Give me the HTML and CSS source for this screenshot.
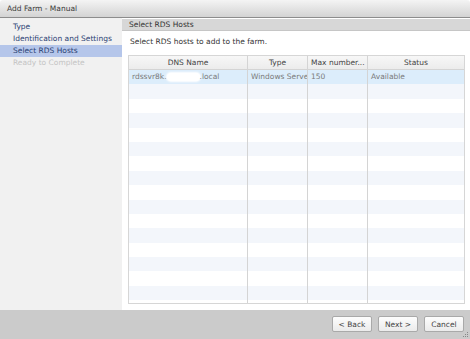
FILE: index.html
```
<!DOCTYPE html>
<html lang="en">
<head>
  <meta charset="UTF-8" />
  <title>Add Farm - Manual</title>
  <link rel="stylesheet" href="styles.css">
</head>
<body>
  <div class="window">
    <div class="titlebar">Add Farm - Manual</div>
    <div class="main">
      <div class="steps">
        <div class="step">Type</div>
        <div class="step">Identification and Settings</div>
        <div class="step current">Select RDS Hosts</div>
        <div class="step disabled">Ready to Complete</div>
      </div>
      <div class="panel">
        <div class="panel-head">Select RDS Hosts</div>
        <div class="panel-body">
          <p class="intro">Select RDS hosts to add to the farm.</p>
          <div class="grid">
            <div class="row head">
              <div class="cell center">DNS Name</div>
              <div class="cell center">Type</div>
              <div class="cell">Max number...</div>
              <div class="cell center">Status</div>
            </div>
            <div class="rows">
              <div class="row selected">
                <div class="cell">rdssvr8k.<span class="blur"></span>.local</div>
                <div class="cell">Windows Server</div>
                <div class="cell">150</div>
                <div class="cell">Available</div>
              </div>
              <div class="row"><div class="cell"></div><div class="cell"></div><div class="cell"></div><div class="cell"></div></div>
              <div class="row"><div class="cell"></div><div class="cell"></div><div class="cell"></div><div class="cell"></div></div>
              <div class="row"><div class="cell"></div><div class="cell"></div><div class="cell"></div><div class="cell"></div></div>
              <div class="row"><div class="cell"></div><div class="cell"></div><div class="cell"></div><div class="cell"></div></div>
              <div class="row"><div class="cell"></div><div class="cell"></div><div class="cell"></div><div class="cell"></div></div>
              <div class="row"><div class="cell"></div><div class="cell"></div><div class="cell"></div><div class="cell"></div></div>
              <div class="row"><div class="cell"></div><div class="cell"></div><div class="cell"></div><div class="cell"></div></div>
              <div class="row"><div class="cell"></div><div class="cell"></div><div class="cell"></div><div class="cell"></div></div>
              <div class="row"><div class="cell"></div><div class="cell"></div><div class="cell"></div><div class="cell"></div></div>
              <div class="row"><div class="cell"></div><div class="cell"></div><div class="cell"></div><div class="cell"></div></div>
              <div class="row"><div class="cell"></div><div class="cell"></div><div class="cell"></div><div class="cell"></div></div>
              <div class="row"><div class="cell"></div><div class="cell"></div><div class="cell"></div><div class="cell"></div></div>
              <div class="row"><div class="cell"></div><div class="cell"></div><div class="cell"></div><div class="cell"></div></div>
              <div class="row"><div class="cell"></div><div class="cell"></div><div class="cell"></div><div class="cell"></div></div>
              <div class="row"><div class="cell"></div><div class="cell"></div><div class="cell"></div><div class="cell"></div></div>
              <div class="row"><div class="cell"></div><div class="cell"></div><div class="cell"></div><div class="cell"></div></div>
            </div>
          </div>
        </div>
      </div>
    </div>
    <div class="footer">
      <button type="button">&lt; Back</button>
      <button type="button">Next &gt;</button>
      <button type="button">Cancel</button>
      <svg class="grip" width="6" height="6" viewBox="0 0 6 6">
        <rect x="4" y="0" width="1" height="1" fill="#888"/>
        <rect x="2" y="2" width="1" height="1" fill="#888"/>
        <rect x="4" y="2" width="1" height="1" fill="#888"/>
        <rect x="0" y="4" width="1" height="1" fill="#888"/>
        <rect x="2" y="4" width="1" height="1" fill="#888"/>
        <rect x="4" y="4" width="1" height="1" fill="#888"/>
      </svg>
    </div>
  </div>
</body>
</html>
```

FILE: styles.css
```
* {
  box-sizing: border-box;
}

body {
  margin: 0;
  font-family: 'DejaVu Sans', Verdana, sans-serif;
  font-size: 7.5px;
  color: #333;
  background: #fff;
}

.window {
  width: 470px;
  height: 339px;
  display: flex;
  flex-direction: column;
  position: relative;
  border-radius: 3px 3px 0 0;
  overflow: hidden;
}

.titlebar {
  flex: none;
  height: 18px;
  line-height: 17px;
  padding-left: 7px;
  color: #3a3a3a;
  background: linear-gradient(#f4f4f4, #d3d3d3);
  border-bottom: 1px solid #8c8c8c;
}

.main {
  flex: 1;
  min-height: 0;
  display: flex;
  align-items: stretch;
}

.steps {
  width: 122px;
  flex: none;
  padding-top: 3px;
  background: #f1f1f1;
  display: flex;
  flex-direction: column;
}

.step {
  height: 12px;
  line-height: 12px;
  padding-left: 13px;
  color: #2b4274;
  white-space: nowrap;
}

.step.current {
  background: #b5c6ea;
}

.step.disabled {
  color: #c4c4c4;
}

.panel {
  flex: 1;
  min-height: 0;
  display: flex;
  flex-direction: column;
  padding-top: 1px;
}

.panel-head {
  flex: none;
  height: 12px;
  line-height: 11px;
  padding-left: 7px;
  color: #333;
  background: #d7d7d7;
  border-bottom: 1px solid #c6c6c6;
}

.panel-body {
  flex: 1;
  min-height: 0;
  padding: 5px 5px 6px 6px;
  display: flex;
  flex-direction: column;
}

.intro {
  margin: 0 0 7px 2px;
  line-height: 12px;
  color: #333;
}

.grid {
  flex: 1;
  min-height: 0;
  border: 1px solid #d6d6d6;
  overflow: hidden;
  display: flex;
  flex-direction: column;
}

.rows {
  flex: 1;
  min-height: 0;
  overflow: hidden;
}

.row {
  display: grid;
  grid-template-columns: 119px 60px 60px 1fr;
  height: 14.4px;
}

.row:nth-child(even) {
  background: #f3f6fb;
}

.row.head {
  height: 14px;
  flex: none;
  background: linear-gradient(#f7f7f7, #ececec);
  border-bottom: 1px solid #d4d4d4;
}

.row.selected {
  background: #dcedfb;
}

.cell {
  line-height: 13px;
  padding: 0 3px;
  border-right: 1px solid #d4d4d4;
  white-space: nowrap;
  overflow: hidden;
  color: #7a7a7a;
}

.row.head .cell {
  color: #444;
}

.cell:last-child {
  border-right: none;
}

.cell.center {
  text-align: center;
}

.blur {
  display: inline-block;
  width: 33px;
  height: 8px;
  vertical-align: middle;
  background: #fff;
  border-radius: 4px;
  box-shadow: 0 0 2px 1px #fff;
}

.footer {
  flex: none;
  height: 29px;
  background: #cbcbcb;
  display: flex;
  justify-content: flex-end;
  align-items: flex-start;
  gap: 6px;
  padding: 6px 6px 0 0;
  position: relative;
}

.footer button {
  width: 40px;
  height: 16px;
  padding: 0;
  font-family: inherit;
  font-size: 7.5px;
  color: #444;
  background: linear-gradient(#fdfdfd, #ebebeb);
  border: 1px solid #a9a9a9;
  border-radius: 2px;
}

.grip {
  position: absolute;
  right: 1px;
  bottom: 1px;
}
```
